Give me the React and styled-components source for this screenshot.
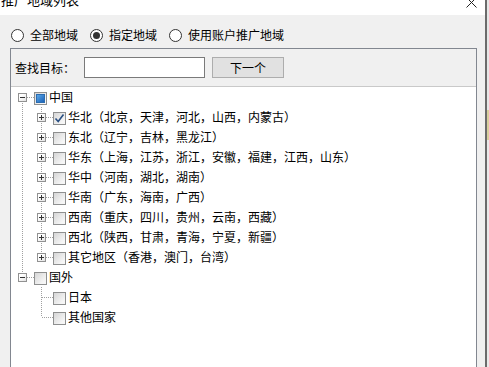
import styled, { createGlobalStyle, css } from "styled-components";

const GlobalStyle = createGlobalStyle`
  html, body {
    margin: 0;
    padding: 0;
    background: #f0f0f0;
  }
  * {
    box-sizing: border-box;
  }
`

const Screen = styled.div`
  width: 489px;
  height: 367px;
  display: flex;
  overflow: hidden;
  font-family: "Noto Sans CJK SC", "Noto Sans", sans-serif;
  font-size: 12px;
  color: #000;
`

const Window = styled.div`
  width: 487px;
  flex: none;
  display: flex;
  flex-direction: column;
  border-right: 2px solid #6b6b6b;
`

const Behind = styled.div`
  flex: 1;
  background: linear-gradient(to bottom, #e6e6e6 0 110px, #d8cf9e 110px 140px, #e9e9e9 140px);
`

const TitleBar = styled.div`
  height: 15px;
  flex: none;
  background: #fff;
  display: flex;
  align-items: flex-start;
  justify-content: space-between;
  overflow: hidden;
`

const Title = styled.span`
  margin-top: -9px;
  margin-left: 1px;
  font-size: 13px;
  line-height: 18px;
`

const CloseIcon = styled.svg`
  margin-right: 8px;
  margin-top: -3px;
`

const Body = styled.div`
  flex: 1;
  display: flex;
  flex-direction: column;
  padding: 10px 8px 0 10px;
  min-height: 0;
`

const RadioRow = styled.div`
  height: 20px;
  display: flex;
  align-items: center;
  margin-left: 1px;
  margin-bottom: 3px;
`

const RadioItem = styled.label`
  display: flex;
  align-items: center;
  margin-right: 12px;
  font-size: 12px;
  line-height: 20px;
`

const RadioCircle = styled.span`
  width: 13px;
  height: 13px;
  border-radius: 50%;
  border: 1px solid #333;
  background: #fff;
  margin-right: 6px;
  display: flex;
  align-items: center;
  justify-content: center;

  &::after {
    content: "";
    width: 7px;
    height: 7px;
    border-radius: 50%;
    background: ${p => (p.$checked ? "#333" : "transparent")};
  }
`

const Panel = styled.div`
  flex: 1;
  border: 1px solid #828790;
  border-bottom: none;
  display: flex;
  flex-direction: column;
  min-height: 0;
`

const SearchBar = styled.div`
  height: 38px;
  flex: none;
  display: flex;
  align-items: center;
  padding-left: 4px;
  border-bottom: 1px solid #c9c9c9;
`

const SearchLabel = styled.span`
  width: 69px;
  font-size: 12px;
`

const SearchInput = styled.input`
  width: 121px;
  height: 21px;
  border: 1px solid #7a7a7a;
  background: #fff;
  padding: 0 3px;
  margin: 0 7px 0 0;
  outline: none;
`

const NextButton = styled.button`
  width: 72px;
  height: 21px;
  border: 1px solid #adadad;
  background: #e1e1e1;
  font-family: inherit;
  font-size: 12px;
  padding: 0;
  color: #000;
`

const Tree = styled.div`
  flex: 1;
  background: #fff;
  padding-left: 2px;
`

const Row = styled.div`
  height: 20px;
  display: flex;
  align-items: center;
`

const dotsV = "repeating-linear-gradient(to bottom, #a0a0a0 0 1px, transparent 1px 2px)";
const dotsH = "repeating-linear-gradient(to right, #a0a0a0 0 1px, transparent 1px 2px)";

const lineSpans = {
    full: css`top: 0; bottom: 0;`,
    top: css`top: 0; height: 10px;`,
    bottom: css`top: 10px; bottom: 0;`,
};

const Cell = styled.span`
  position: relative;
  width: 19px;
  height: 20px;
  flex: none;

  &::before {
    content: "";
    position: absolute;
    left: 9px;
    width: 1px;
    background: ${dotsV};
    display: ${p => (p.$line ? "block" : "none")};
    ${p => lineSpans[p.$line]}
  }

  &::after {
    content: "";
    position: absolute;
    top: 10px;
    left: 10px;
    width: 11px;
    height: 1px;
    background: ${dotsH};
    display: ${p => (p.$branch ? "block" : "none")};
  }
`

const Expander = styled.span`
  position: absolute;
  z-index: 1;
  left: 5px;
  top: 6px;
  width: 9px;
  height: 9px;
  border: 1px solid #919191;
  background: linear-gradient(135deg, #fff 30%, #e2e2e2);

  &::before {
    content: "";
    position: absolute;
    left: 1px;
    top: 3px;
    width: 5px;
    height: 1px;
    background: #333;
  }

  &::after {
    content: "";
    position: absolute;
    left: 3px;
    top: 1px;
    width: 1px;
    height: 5px;
    background: #333;
    display: ${p => (p.$open ? "none" : "block")};
  }
`

const CheckBox = styled.span`
  width: 13px;
  height: 13px;
  flex: none;
  margin-left: 2px;
  margin-right: 2px;
  margin-top: 2px;
  border: 1px solid #8e8f8f;
  background: linear-gradient(135deg, #d6d6d6, #f6f6f6 80%);
  display: flex;
  align-items: center;
  justify-content: center;
`

const PartialMark = styled.span`
  width: 9px;
  height: 9px;
  background: linear-gradient(135deg, #5aa6e6, #1d63b8);
  border: 1px solid #2b6cb0;
`

const Label = styled.span`
  white-space: nowrap;
  font-size: 12px;
  line-height: 20px;
`

const china = [
    ["华北（北京，天津，河北，山西，内蒙古）", "checked"],
    ["东北（辽宁，吉林，黑龙江）"],
    ["华东（上海，江苏，浙江，安徽，福建，江西，山东）"],
    ["华中（河南，湖北，湖南）"],
    ["华南（广东，海南，广西）"],
    ["西南（重庆，四川，贵州，云南，西藏）"],
    ["西北（陕西，甘肃，青海，宁夏，新疆）"],
    ["其它地区（香港，澳门，台湾）"],
];

const rows = [
    {label: "中国", guides: [], line: "bottom", expander: "open", check: "partial"},
    ...china.map(([label, check], i) => ({
        label,
        check,
        guides: ["full"],
        line: i === china.length - 1 ? "top" : "full",
        expander: "closed",
    })),
    {label: "国外", guides: [], line: "top", expander: "open"},
    {label: "日本", guides: [null], line: "full"},
    {label: "其他国家", guides: [null], line: "top"},
];

function Check({state}) {
    return (
        <CheckBox>
            {state === "partial" && <PartialMark/>}
            {state === "checked" && (
                <svg width="11" height="11" viewBox="0 0 11 11">
                    <path d="M1.5 5.5 L4.2 8.5 L9.5 1.5" fill="none" stroke="#2a4f82" strokeWidth="1.6"/>
                </svg>
            )}
        </CheckBox>
    );
}

function Radio({checked, children}) {
    return (
        <RadioItem>
            <RadioCircle $checked={checked}/>
            {children}
        </RadioItem>
    );
}

export default function App() {
    return (
        <>
            <GlobalStyle/>
            <Screen>
                <Window>
                    <TitleBar>
                        <Title>推广地域列表</Title>
                        <CloseIcon width="11" height="11" viewBox="0 0 11 11">
                            <path d="M0.5 0.5 L10.5 10.5 M10.5 0.5 L0.5 10.5" stroke="#222" strokeWidth="1"/>
                        </CloseIcon>
                    </TitleBar>
                    <Body>
                        <RadioRow>
                            <Radio>全部地域</Radio>
                            <Radio checked>指定地域</Radio>
                            <Radio>使用账户推广地域</Radio>
                        </RadioRow>
                        <Panel>
                            <SearchBar>
                                <SearchLabel>查找目标：</SearchLabel>
                                <SearchInput/>
                                <NextButton>下一个</NextButton>
                            </SearchBar>
                            <Tree>
                                {rows.map(row => (
                                    <Row key={row.label}>
                                        {row.guides.map((g, i) => <Cell key={i} $line={g}/>)}
                                        <Cell $line={row.line} $branch>
                                            {row.expander && <Expander $open={row.expander === "open"}/>}
                                        </Cell>
                                        <Check state={row.check}/>
                                        <Label>{row.label}</Label>
                                    </Row>
                                ))}
                            </Tree>
                        </Panel>
                    </Body>
                </Window>
                <Behind/>
            </Screen>
        </>
    );
}
